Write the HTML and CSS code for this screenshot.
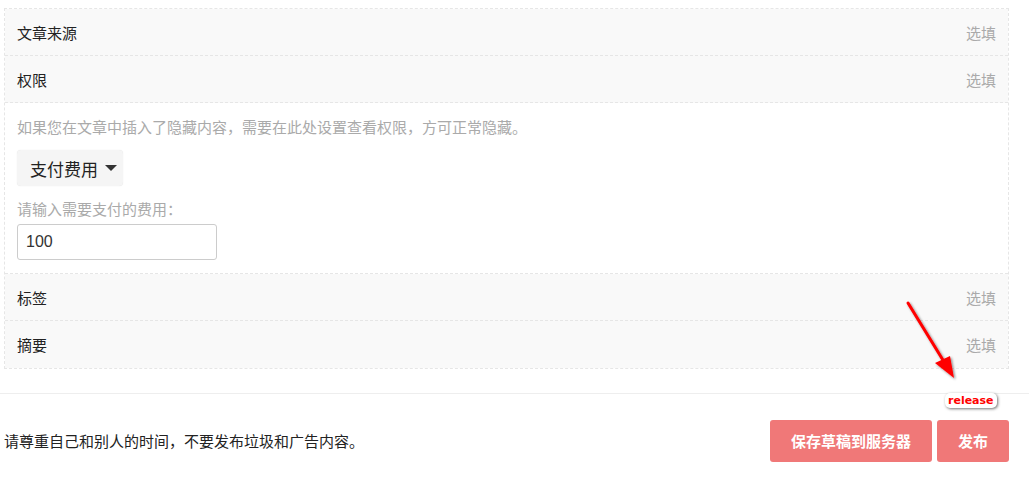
FILE: index.html
```html
<!DOCTYPE html>
<html lang="zh">
<head>
<meta charset="utf-8">
<link rel="stylesheet" href="styles.css">
</head>
<body>
<div class="page">
  <div class="panel">
    <div class="row"><span class="row-title">文章来源</span><span class="row-hint">选填</span></div>
    <div class="row"><span class="row-title">权限</span><span class="row-hint">选填</span></div>
    <div class="content">
      <p class="tip">如果您在文章中插入了隐藏内容，需要在此处设置查看权限，方可正常隐藏。</p>
      <button class="select">支付费用<span class="caret"></span></button>
      <label class="label">请输入需要支付的费用：</label>
      <input class="input" type="text" value="100">
    </div>
    <div class="row"><span class="row-title">标签</span><span class="row-hint">选填</span></div>
    <div class="row"><span class="row-title">摘要</span><span class="row-hint">选填</span></div>
  </div>
  <div class="footer">
    <span class="notice">请尊重自己和别人的时间，不要发布垃圾和广告内容。</span>
    <div class="actions">
      <button class="btn btn-wide">保存草稿到服务器</button>
      <button class="btn btn-narrow">发布</button>
    </div>
  </div>
  <svg class="arrow" width="70" height="90" viewBox="0 0 70 90">
    <defs>
      <filter id="sh" x="-50%" y="-50%" width="200%" height="200%">
        <feDropShadow dx="1.5" dy="1.5" stdDeviation="1.2" flood-color="#000" flood-opacity="0.45"/>
      </filter>
    </defs>
    <g filter="url(#sh)">
      <line x1="6" y1="4" x2="44" y2="66" stroke="#ff0000" stroke-width="3" stroke-linecap="round"/>
      <polygon points="52,79 33,64 48,57" fill="#ff0000"/>
    </g>
  </svg>
  <span class="release">release</span>
</div>
</body>
</html>
```
FILE: styles.css
```css
* { box-sizing: border-box; }
html, body { margin: 0; padding: 0; background: #fff; }
body {
  font-family: "Microsoft YaHei", "Noto Sans CJK SC", "Noto Sans", sans-serif;
  font-size: 15px;
  color: #333;
}
.page {
  position: relative;
  width: 1029px;
  height: 484px;
  padding-top: 8px;
  overflow: hidden;
}
.panel {
  margin-left: 4px;
  width: 1005px;
  border: 1px dashed #e6e6e6;
}
.row {
  display: flex;
  justify-content: space-between;
  align-items: center;
  height: 47px;
  padding: 0 12px 0 12px;
  background: #f9f9f9;
  border-bottom: 1px dashed #e6e6e6;
}
.row:last-child { border-bottom: none; }
.row-title { color: #222; font-size: 15px; }
.row-hint { color: #aaa; font-size: 15px; }
.content {
  padding: 13px 12px 13px 12px;
  border-bottom: 1px dashed #e6e6e6;
  background: #fff;
}
.tip {
  margin: 0;
  color: #aaa;
  font-size: 15px;
  line-height: 22px;
}
.select {
  display: flex;
  align-items: center;
  margin-top: 12px;
  width: 106px;
  height: 36px;
  padding: 0 0 0 13px;
  border: none;
  border-radius: 4px;
  background: #f5f5f5;
  box-shadow: 0 0 1px rgba(0,0,0,0.15);
  font-family: inherit;
  font-size: 17px;
  color: #222;
}
.caret {
  margin-left: 7px;
  width: 0;
  height: 0;
  border-left: 6px solid transparent;
  border-right: 6px solid transparent;
  border-top: 6px solid #333;
}
.label {
  display: block;
  margin-top: 12px;
  color: #aaa;
  font-size: 15px;
  line-height: 22px;
}
.input {
  display: block;
  margin-top: 4px;
  width: 200px;
  height: 36px;
  padding: 0 8px;
  border: 1px solid #ccc;
  border-radius: 3px;
  font-family: "Liberation Sans", Arial, sans-serif;
  font-size: 16px;
  color: #333;
}
.footer {
  margin-top: 24px;
  border-top: 1px solid #eee;
  display: flex;
  justify-content: space-between;
  align-items: center;
  height: 94px;
  padding: 0 20px 0 4px;
}
.notice { color: #222; font-size: 15px; }
.actions { display: flex; gap: 5px; }
.btn {
  height: 42px;
  border: none;
  border-radius: 3px;
  background: #f07878;
  color: #fff;
  font-family: inherit;
  font-size: 15px;
  font-weight: bold;
}
.btn-wide { width: 162px; }
.btn-narrow { width: 72px; }
.arrow {
  position: absolute;
  left: 902px;
  top: 299px;
}
.release {
  position: absolute;
  left: 945px;
  top: 393px;
  padding: 0 3px;
  height: 15px;
  line-height: 15px;
  background: #fff;
  border-radius: 5px;
  box-shadow: 1px 1px 3px rgba(0,0,0,0.55);
  color: #ff0000;
  font-family: "DejaVu Sans", "Liberation Sans", sans-serif;
  font-weight: bold;
  font-size: 11px;
}
```
